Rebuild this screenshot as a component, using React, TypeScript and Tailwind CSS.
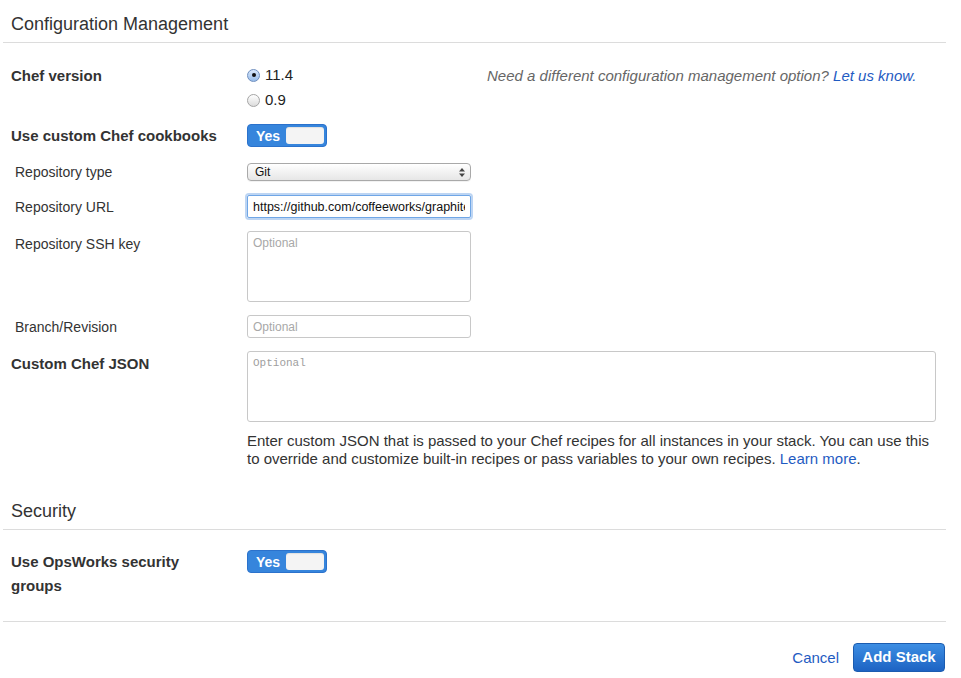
import React from 'react';

const Toggle: React.FC = () => (
    <div className="flex h-[23px] w-[80px] items-center rounded-[4px] border border-[#2b72cc] bg-[#3685dc] p-[2px]">
        <span className="w-[36px] text-center text-[14px] font-bold leading-none text-white">Yes</span>
        <span className="h-full flex-1 rounded-[3px] bg-[#f4f4f4] shadow-[inset_0_1px_1px_rgba(0,0,0,0.08)]" />
    </div>
);

const Radio: React.FC<{ checked?: boolean; label: string }> = ({ checked, label }) => (
    <label className="flex h-[20px] items-center gap-[5px] text-[15px] text-[#222]">
        {checked ? (
            <span className="flex h-[13px] w-[13px] items-center justify-center rounded-full border border-[#6f8fbf] bg-gradient-to-b from-[#dbe9fb] to-[#98bdea]">
                <span className="h-[4px] w-[4px] rounded-full bg-[#111]" />
            </span>
        ) : (
            <span className="h-[13px] w-[13px] rounded-full border border-[#a5a5a5] bg-gradient-to-b from-white to-[#dcdcdc]" />
        )}
        {label}
    </label>
);

const SubLabel: React.FC<{ children: React.ReactNode; className?: string }> = ({ children, className }) => (
    <div className={`pl-[4px] text-[14px] leading-[20px] text-[#333] ${className ?? ''}`}>{children}</div>
);

const BoldLabel: React.FC<{ children: React.ReactNode; className?: string }> = ({ children, className }) => (
    <div className={`text-[15px] font-bold leading-[20px] text-[#333] ${className ?? ''}`}>{children}</div>
);

export default function App() {
    return (
        <div
            className="h-[678px] w-[961px] overflow-hidden bg-white"
            style={{ fontFamily: '"Liberation Sans", Arial, sans-serif' }}
        >
            <div className="ml-[3px] w-[943px]">
                {/* Configuration Management */}
                <div className="border-b border-[#dcdcdc] pb-[8px] pl-[8px] pt-[14px] text-[18px] leading-[20px] text-[#333]">
                    Configuration Management
                </div>

                <div className="pl-[8px]">
                    <div className="mt-[22px] grid grid-cols-[236px_1fr]">
                        <BoldLabel className="pt-[1px]">Chef version</BoldLabel>
                        <div className="flex">
                            <div className="flex w-[240px] flex-col gap-[5px]">
                                <Radio checked label="11.4" />
                                <Radio label="0.9" />
                            </div>
                            <p className="pt-[1px] text-[15px] italic leading-[20px] text-[#666]">
                                Need a different configuration management option?{' '}
                                <a className="text-[#1f5bc2]">Let us know.</a>
                            </p>
                        </div>
                    </div>

                    <div className="mt-[14px] grid h-[23px] grid-cols-[236px_1fr] items-center">
                        <BoldLabel>Use custom Chef cookbooks</BoldLabel>
                        <Toggle />
                    </div>

                    <div className="mt-[15px] grid h-[18px] grid-cols-[236px_1fr] items-center">
                        <SubLabel>Repository type</SubLabel>
                        <div className="flex h-[18px] w-[224px] items-center justify-between rounded-[4px] border border-[#a9a9a9] bg-gradient-to-b from-white to-[#e6e6e6] pl-[7px] pr-[5px] text-[12px] text-[#111] shadow-[0_1px_0_rgba(0,0,0,0.05)]">
                            <span>Git</span>
                            <svg width="6" height="9" viewBox="0 0 6 9">
                                <path d="M3 0 L6 3.5 L0 3.5 Z" fill="#444" />
                                <path d="M0 5.5 L6 5.5 L3 9 Z" fill="#444" />
                            </svg>
                        </div>
                    </div>

                    <div className="mt-[15px] grid grid-cols-[236px_1fr] items-center">
                        <SubLabel className="pt-[1px]">Repository URL</SubLabel>
                        <input
                            readOnly
                            value="https://github.com/coffeeworks/graphite-chef"
                            className="h-[23px] w-[224px] rounded-[2px] border border-[#6fa6e6] px-[5px] text-[12.5px] text-[#111] shadow-[0_0_0_2px_rgba(108,162,228,0.45)] outline-none"
                        />
                    </div>

                    <div className="mt-[13px] grid grid-cols-[236px_1fr] items-start">
                        <SubLabel className="pt-[3px]">Repository SSH key</SubLabel>
                        <textarea
                            readOnly
                            placeholder="Optional"
                            className="h-[71px] w-[224px] resize-none rounded-[3px] border border-[#c8c8c8] px-[5px] py-[3px] text-[12px] leading-[16px] placeholder:text-[#a8a8a8] outline-none"
                        />
                    </div>

                    <div className="mt-[13px] grid grid-cols-[236px_1fr] items-center">
                        <SubLabel className="pt-[1px]">Branch/Revision</SubLabel>
                        <input
                            readOnly
                            placeholder="Optional"
                            className="h-[23px] w-[224px] rounded-[3px] border border-[#c8c8c8] px-[5px] text-[12px] placeholder:text-[#a8a8a8] outline-none"
                        />
                    </div>

                    <div className="mt-[13px] grid grid-cols-[236px_1fr] items-start">
                        <BoldLabel className="pt-[3px]">Custom Chef JSON</BoldLabel>
                        <div>
                            <textarea
                                readOnly
                                placeholder="Optional"
                                className="block h-[71px] w-[689px] resize-none rounded-[3px] border border-[#c8c8c8] px-[5px] py-[3px] text-[11px] leading-[16px] placeholder:text-[#a0a0a0] outline-none"
                                style={{ fontFamily: '"Liberation Mono", monospace' }}
                            />
                            <p className="mt-[10px] whitespace-nowrap text-[15px] leading-[18px] text-[#333]">
                                Enter custom JSON that is passed to your Chef recipes for all instances in your stack. You can use this
                                <br />
                                to override and customize built-in recipes or pass variables to your own recipes.{' '}
                                <a className="text-[#1f5bc2]">Learn more</a>.
                            </p>
                        </div>
                    </div>
                </div>

                {/* Security */}
                <div className="mt-[33px] border-b border-[#dcdcdc] pb-[8px] pl-[8px] text-[18px] leading-[20px] text-[#333]">
                    Security
                </div>

                <div className="border-b border-[#dcdcdc] pb-[23px] pl-[8px]">
                    <div className="mt-[19px] grid grid-cols-[236px_1fr] items-start">
                        <div className="w-[200px] pt-[1px] text-[15px] font-bold leading-[24px] text-[#333]">
                            Use OpsWorks security groups
                        </div>
                        <div className="mt-[1px]">
                            <Toggle />
                        </div>
                    </div>
                </div>

                <div className="mt-[21px] flex items-center justify-end gap-[14px] pr-[1px]">
                    <a className="pt-[2px] text-[15px] text-[#1f5bc2]">Cancel</a>
                    <button className="h-[29px] w-[92px] rounded-[4px] border border-[#1b5cb0] bg-gradient-to-b from-[#3d8ee3] to-[#1d63c3] text-[15px] font-bold text-white">
                        Add Stack
                    </button>
                </div>
            </div>
        </div>
    );
}
